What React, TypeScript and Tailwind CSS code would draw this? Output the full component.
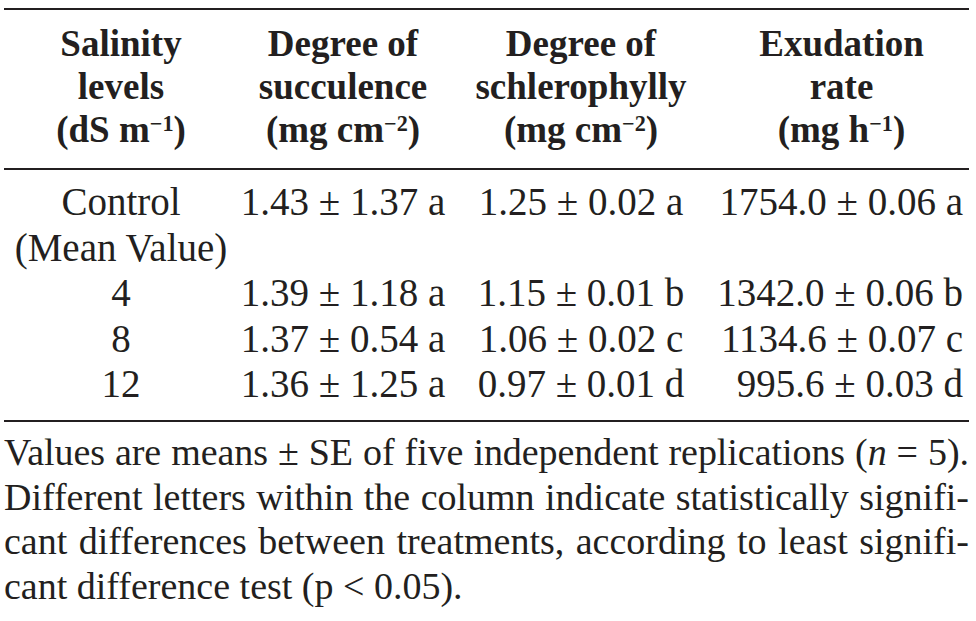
import React from "react";

const Rule = () => <div className="h-[2px] bg-[#231f20]" />;

const Sup = ({ children }: { children: React.ReactNode }) => (
  <sup className="text-[60%]">{children}</sup>
);

export default function App() {
  const rows = [
    { s: "4", a: "1.39 ± 1.18 a", b: "1.15 ± 0.01 b", c: "1342.0 ± 0.06 b" },
    { s: "8", a: "1.37 ± 0.54 a", b: "1.06 ± 0.02 c", c: "1134.6 ± 0.07 c" },
    { s: "12", a: "1.36 ± 1.25 a", b: "0.97 ± 0.01 d", c: "995.6 ± 0.03 d" },
  ];
  return (
    <div className="w-[976px] h-[621px] overflow-hidden bg-white text-[#231f20] font-[family-name:'Liberation_Serif','Times_New_Roman',Times,serif] pt-[8px] pl-[4px]">
      <div className="w-[965px]">
        <Rule />
        <div className="grid grid-cols-[234px_210px_266px_255px] pt-[12px] pb-[17px] text-[37px] leading-[43px] font-bold text-center">
          <div>
            Salinity
            <br />
            levels
            <br />
            (dS m<Sup>−1</Sup>)
          </div>
          <div>
            Degree of
            <br />
            succulence
            <br />
            (mg cm<Sup>−2</Sup>)
          </div>
          <div>
            Degree of
            <br />
            schlerophylly
            <br />
            (mg cm<Sup>−2</Sup>)
          </div>
          <div>
            Exudation
            <br />
            rate
            <br />
            (mg h<Sup>−1</Sup>)
          </div>
        </div>
        <Rule />
        <div className="grid grid-cols-[234px_210px_266px_255px] pt-[9px] pb-[13.5px] text-[39px] leading-[45.5px] whitespace-nowrap">
          <div className="text-center">
            Control
            <br />
            (Mean Value)
          </div>
          <div className="text-center">1.43 ± 1.37 a</div>
          <div className="text-center">1.25 ± 0.02 a</div>
          <div className="text-right pr-[6px]">1754.0 ± 0.06 a</div>
          {rows.map((r) => (
            <React.Fragment key={r.s}>
              <div className="text-center">{r.s}</div>
              <div className="text-center">{r.a}</div>
              <div className="text-center">{r.b}</div>
              <div className="text-right pr-[6px]">{r.c}</div>
            </React.Fragment>
          ))}
        </div>
        <Rule />
        <div className="mt-[8px] text-[38px] leading-[44.5px]">
          <div className="text-justify [text-align-last:justify] whitespace-nowrap tracking-[-0.06px]">
            Values are means ± SE of five independent replications (<i>n</i> = 5).
          </div>
          <div className="text-justify [text-align-last:justify]">
            Different letters within the column indicate statistically signifi-
          </div>
          <div className="text-justify [text-align-last:justify]">
            cant differences between treatments, according to least signifi-
          </div>
          <div>cant difference test (p &lt; 0.05).</div>
        </div>
      </div>
    </div>
  );
}
